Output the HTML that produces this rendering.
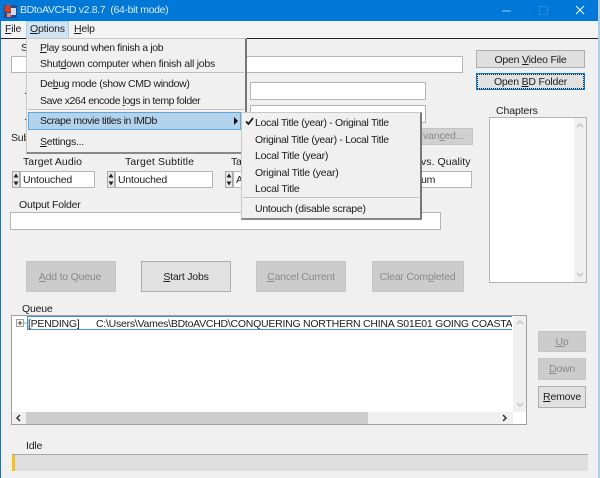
<!DOCTYPE html>
<html><head><meta charset="utf-8"><style>
html,body{margin:0;padding:0;width:600px;height:478px;overflow:hidden;background:#f0f0f0}
body{position:relative;font-family:"Liberation Sans",sans-serif;font-size:10.5px;letter-spacing:-.2px;color:#1c1c1c;filter:blur(.3px)}
div{position:absolute;box-sizing:border-box}
.t{white-space:nowrap;line-height:14px;height:14px}
.i{background:#fff;border:1px solid #b4b4b4}
.b{background:#e1e1e1;border:1px solid #adadad;text-align:center;color:#1c1c1c}
.d{background:#cccccc;border:1px solid #c4c4c4;text-align:center;color:#8a8a8a}
.s{width:8px;background:#e8e8e8;border:1px solid #a8a8a8}
.sep{height:2px;background:#bdbdbd;border-bottom:1px solid #f5f5f5}
.m{letter-spacing:-.25px}
.n{letter-spacing:-.35px}
.w{letter-spacing:.05px}
u{text-decoration:underline}
</style></head><body>
<div style="left:0;top:0;width:600px;height:21px;background:#0078d7"></div>
<div style="left:0;top:0;width:1px;height:478px;background:#0078d7"></div>
<div style="left:598px;top:0;width:2px;height:478px;background:#a9cfe9"></div>
<svg style="position:absolute;left:3px;top:3px" width="15" height="16" viewBox="0 0 15 16"><rect x="1" y="2" width="13" height="13" fill="#2b4a8c"/><rect x="2" y="2" width="6" height="7" fill="#c8402c"/><rect x="8" y="5" width="5" height="7" fill="#d9d9e6"/><rect x="4" y="10" width="4" height="4" fill="#e08a70"/></svg>
<div class="t" style="left:20px;top:3px;color:#dcebf8;letter-spacing:-.35px">BDtoAVCHD v2.8.7&nbsp; (64-bit mode)</div>
<svg style="position:absolute;left:500px;top:0" width="90" height="21" viewBox="0 0 90 21"><path d="M2 11h9" stroke="#9cc9ec" stroke-width="1"/><rect x="39.500" y="6.500" width="8" height="8" fill="none" stroke="#2a8ad8"/><path d="M76 6l8 8M84 6l-8 8" stroke="#e6f1fa" stroke-width="1.200"/></svg>

<div style="left:1px;top:21px;width:597px;height:17px;background:#f3f3f3"></div>
<div style="left:1px;top:38px;width:597px;height:1px;background:#222"></div>
<div style="left:26px;top:21px;width:43px;height:17px;background:#cfe3f2;border:1px solid #a8cfe8;border-bottom:0"></div>
<div class="t" style="left:5px;top:22px"><u>F</u>ile</div>
<div class="t" style="left:30px;top:22px"><u>O</u>ptions</div>
<div class="t" style="left:74px;top:22px"><u>H</u>elp</div>

<div class="t" style="left:21px;top:41px">S</div>
<div class="i" style="left:11px;top:56px;width:452px;height:17px"></div>
<div class="i" style="left:250px;top:82px;width:176px;height:18px"></div>
<div class="i" style="left:250px;top:105px;width:176px;height:18px"></div>
<div class="t" style="left:24px;top:84px">.</div>
<div class="t" style="left:24px;top:110px">.</div>
<div class="t" style="left:11px;top:131px">Sub</div>
<div class="d" style="left:421px;top:128px;width:52px;height:17px;background:#d0d0d0;line-height:15px;text-align:left;padding-left:1px">van<u>c</u>ed...</div>

<div class="b t" style="left:476px;top:50px;width:109px;height:18px;line-height:18px;background:#dfdfdf">Open <u>V</u>ideo File</div>
<div class="b t" style="left:476px;top:73px;width:109px;height:17px;line-height:17px;border:1px solid #0078d7;outline:1px dotted #222;outline-offset:-2px">Open <u>B</u>D Folder</div>
<div class="t" style="left:496px;top:104px;letter-spacing:-.1px">Chapters</div>
<div class="i" style="left:489px;top:117px;width:98px;height:166px"></div>
<div style="left:574px;top:118px;width:12px;height:164px;background:#f0f0f0"></div>
<svg style="position:absolute;left:574px;top:120px" width="12" height="160" viewBox="0 0 12 160"><path d="M3 7l3-3 3 3M3 153l3 3 3-3" fill="none" stroke="#c4c4c4" stroke-width="1.500"/></svg>

<div class="t w" style="left:23px;top:155px">Target Audio</div>
<div class="t" style="left:125px;top:155px;letter-spacing:.13px">Target Subtitle</div>
<div class="t" style="left:231px;top:155px">Ta</div>
<div class="t w" style="left:421px;top:155px">vs. Quality</div>

<div class="s" style="left:12px;top:171px;height:17px"></div>
<div class="i" style="left:20px;top:171px;width:75px;height:17px"></div>
<div class="t" style="left:23px;top:173px">Untouched</div>
<div class="s" style="left:107px;top:171px;height:17px"></div>
<div class="i" style="left:115px;top:171px;width:98px;height:17px"></div>
<div class="t" style="left:118px;top:173px">Untouched</div>
<div class="s" style="left:225px;top:171px;height:17px"></div>
<div class="i" style="left:233px;top:171px;width:239px;height:17px"></div>
<div class="t" style="left:236px;top:173px">A</div>
<div class="t" style="left:421px;top:173px">um</div>
<svg style="position:absolute;left:0;top:171px" width="240" height="17" viewBox="0 0 240 17"><path d="M16 2.500l-2.500 4h5zM16 14.500l-2.500-4h5zM111 2.500l-2.500 4h5zM111 14.500l-2.500-4h5zM229 2.500l-2.500 4h5zM229 14.500l-2.500-4h5z" fill="#222"/></svg>

<div class="t" style="left:19px;top:198px">Output Folder</div>
<div class="i" style="left:10px;top:212px;width:431px;height:18px"></div>

<div class="d t" style="left:26px;top:261px;width:90px;height:31px;line-height:31px;padding-right:2px"><u>A</u>dd to Queue</div>
<div class="b t" style="left:141px;top:261px;width:90px;height:31px;line-height:31px"><u>S</u>tart Jobs</div>
<div class="d t" style="left:256px;top:261px;width:90px;height:31px;line-height:31px"><u>C</u>ancel Current</div>
<div class="d t" style="left:372px;top:261px;width:92px;height:31px;line-height:31px;padding-right:1px">Clear Com<u>p</u>leted</div>

<div class="t" style="left:22px;top:302px">Queue</div>
<div style="left:11px;top:315px;width:516px;height:110px;background:#fff;border:1px solid #a0a0a0"></div>
<div style="left:27px;top:316px;width:485px;height:14px;background:#fff;border:1px solid #3f95cf;border-right:0;overflow:hidden"></div>
<div style="left:513px;top:316px;width:13px;height:96px;background:#f0f0f0"></div>
<svg style="position:absolute;left:513px;top:316px" width="13" height="96" viewBox="0 0 13 96"><path d="M4 8l3-3 3 3M4 87l3 3 3-3" fill="none" stroke="#c4c4c4" stroke-width="1.500"/></svg>
<div style="left:12px;top:412px;width:501px;height:12px;background:#f0f0f0"></div>
<div style="left:26px;top:412px;width:342px;height:12px;background:#cdcdcd"></div>
<svg style="position:absolute;left:12px;top:412px" width="500" height="12" viewBox="0 0 500 12"><path d="M8 3l-3 3 3 3M491 3l3 3-3 3" fill="none" stroke="#333" stroke-width="1.500"/></svg>
<svg style="position:absolute;left:16px;top:319px" width="12" height="10" viewBox="0 0 12 10"><rect x=".5" y=".5" width="7" height="7" fill="#f4f4f4" stroke="#a0a0a0"/><path d="M2 4h4M4 2v4" stroke="#444"/><path d="M8 4h3" stroke="#aaa"/></svg>
<div class="t m" style="left:28px;top:317px">[PENDING]</div>
<div class="t m" style="left:96px;top:317px;width:416px;overflow:hidden">C:\Users\Vames\BDtoAVCHD\CONQUERING NORTHERN CHINA S01E01 GOING COASTA</div>

<div class="d t" style="left:538px;top:331px;width:48px;height:21px;line-height:20px"><u>U</u>p</div>
<div class="d t" style="left:538px;top:358px;width:48px;height:22px;line-height:21px"><u>D</u>own</div>
<div class="b t" style="left:538px;top:386px;width:48px;height:22px;line-height:21px"><u>R</u>emove</div>

<div class="t" style="left:26px;top:439px">Idle</div>
<div style="left:12px;top:454px;width:576px;height:17px;background:#dedede;border-top:1px solid #a8a8a8"></div>
<div style="left:12px;top:455px;width:3px;height:16px;background:#f2c21a"></div>

<div style="left:26px;top:38px;width:221px;height:116px;background:#f0f0f0;border:1px solid #c8c8c8;border-right:2px solid #777;border-bottom:2px solid #888"></div>
<div class="t n" style="left:40px;top:41px"><u>P</u>lay sound when finish a job</div>
<div class="t m" style="left:40px;top:57px">Shut<u>d</u>own computer when finish all jobs</div>
<div class="sep" style="left:28px;top:72px;width:216px"></div>
<div class="t n" style="left:40px;top:77px">De<u>b</u>ug mode (show CMD window)</div>
<div class="t" style="left:40px;top:94px;letter-spacing:-.43px">Save x264 encode <u>l</u>ogs in temp folder</div>
<div class="sep" style="left:28px;top:109px;width:216px"></div>
<div style="left:28px;top:112px;width:213px;height:18px;background:#b3d2ec;border:1px solid #5fa5d9"></div>
<div class="t" style="left:40px;top:114px;letter-spacing:-.4px">Scrape movie titles in IMDb</div>
<svg style="position:absolute;left:234px;top:117px" width="6" height="8" viewBox="0 0 6 8"><path d="M0 0l4 4-4 4z" fill="#111"/></svg>
<div class="t m" style="left:40px;top:135px"><u>S</u>ettings...</div>

<div style="left:241px;top:112px;width:181px;height:108px;background:#f0f0f0;border:1px solid #c8c8c8;border-right:2px solid #777;border-bottom:2px solid #888"></div>
<svg style="position:absolute;left:245px;top:117px" width="9" height="9" viewBox="0 0 9 9"><path d="M1 4.500l2.500 2.500 4.500-6" fill="none" stroke="#111" stroke-width="1.700"/></svg>
<div class="t" style="left:255px;top:116px;letter-spacing:-.33px">Local Title (year) - Original Title</div>
<div class="t" style="left:255px;top:133px;letter-spacing:-.33px">Original Title (year) - Local Title</div>
<div class="t m" style="left:255px;top:149px">Local Title (year)</div>
<div class="t m" style="left:255px;top:166px">Original Title (year)</div>
<div class="t m" style="left:255px;top:182px">Local Title</div>
<div class="sep" style="left:243px;top:197px;width:176px"></div>
<div class="t m" style="left:255px;top:202px">Untouch (disable scrape)</div>
</body></html>
